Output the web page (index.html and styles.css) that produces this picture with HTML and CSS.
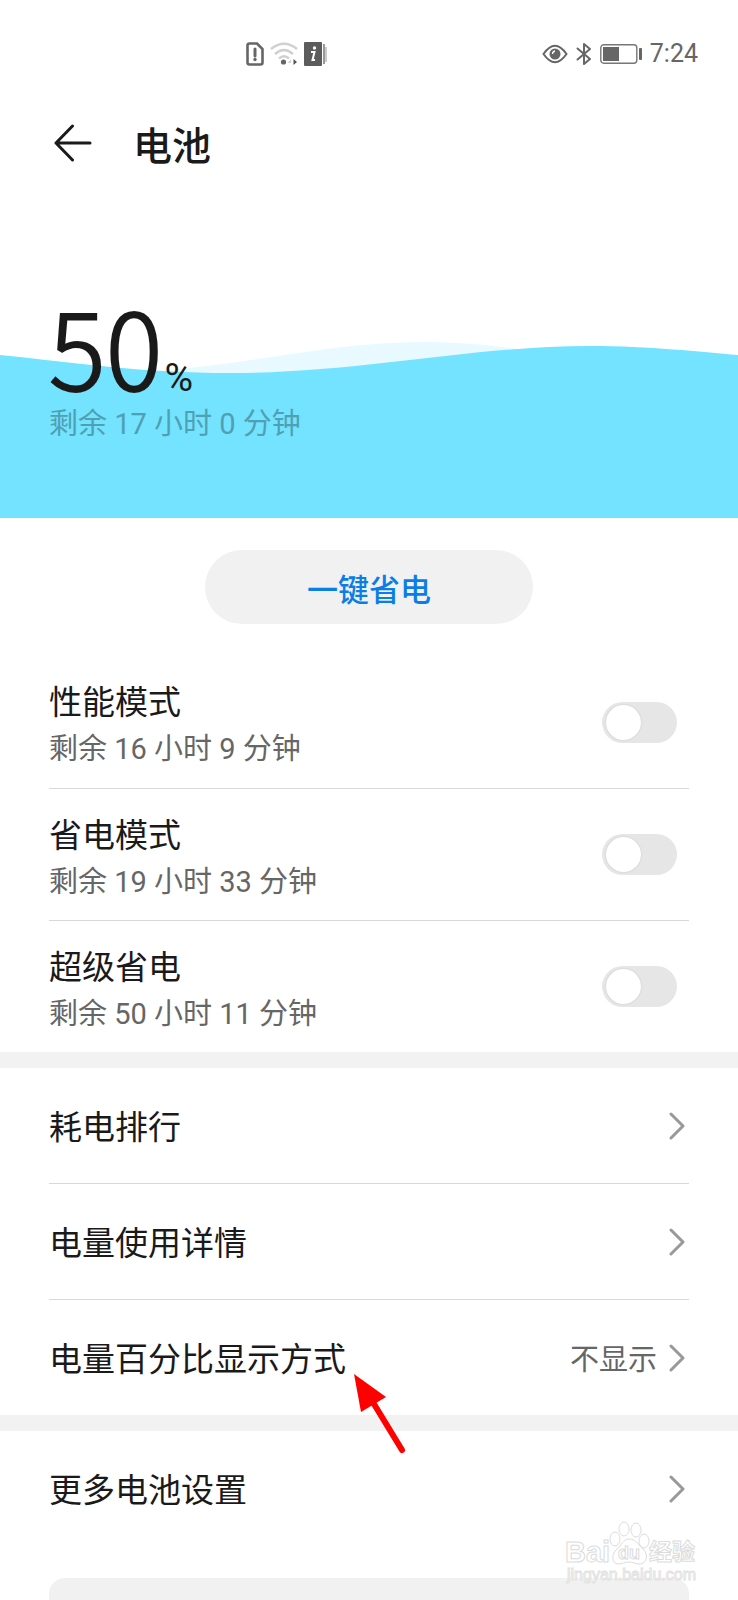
FILE: index.html
```html
<!DOCTYPE html>
<html lang="zh-CN">
  <head>
    <meta charset="UTF-8" />
    <meta name="viewport" content="width=device-width, initial-scale=1.0" />
    <title>电池</title>
    <link rel="stylesheet" href="styles.css">
  </head>
  <body>
    <div class="page">
      <div class="status-bar">
        <div class="status-notify">
          <svg width="18" height="24" viewBox="0 0 18 24">
            <path d="M3.5 1.5H11L16.5 7V20.500Q16.500 22.500 14.500 22.500H3.500Q1.500 22.500 1.500 20.500V3.500Q1.500 1.500 3.500 1.500Z" fill="none" stroke="#666" stroke-width="2.6" />
            <path d="M9 7V14" stroke="#666" stroke-width="3" stroke-linecap="round" />
            <circle cx="9" cy="17.500" r="1.700" fill="#666" />
          </svg>
          <svg width="28" height="24" viewBox="0 0 28 24">
            <g fill="none" stroke="#d0d0d0" stroke-width="2.400">
              <path d="M1 7Q14 -3.500 27 7" />
              <path d="M5 12Q14 4 23 12" />
              <path d="M9 16.500Q14 12 19 16.500" />
            </g>
            <circle cx="13.500" cy="20" r="2.600" fill="#666" />
            <path d="M21 17.500L17.500 21H21Z" fill="#d0d0d0" />
            <path d="M23.500 17L27 20L23.500 23Z" fill="#555" />
          </svg>
          <svg width="24" height="24" viewBox="0 0 24 24">
            <rect x="0" y="0" width="18" height="24" rx="1" fill="#5c5c5c" />
            <path d="M20 2V22" stroke="#777" stroke-width="1.500" />
            <path d="M22 5V20" stroke="#999" stroke-width="1" />
            <circle cx="10.500" cy="6" r="1.700" fill="#fff" />
            <path d="M7 10H10.500L8.500 18H11" fill="none" stroke="#fff" stroke-width="2" />
          </svg>
        </div>
        <div class="status-system">
          <svg width="26" height="20" viewBox="0 0 26 20">
            <path d="M1.500 10Q13 -6.500 24.500 10Q13 26.500 1.500 10Z" fill="none" stroke="#666" stroke-width="2" />
            <circle cx="13" cy="10" r="5.500" fill="#666" />
            <path d="M13 7Q10.500 7.500 10.500 10" fill="none" stroke="#fff" stroke-width="1.300" />
          </svg>
          <svg width="16" height="24" viewBox="0 0 16 24">
            <path d="M1.500 6.500L14 17L8 22V2L14 7L1.500 17.500" fill="none" stroke="#666" stroke-width="2" stroke-linejoin="round" stroke-linecap="round" />
          </svg>
          <svg width="42" height="20" viewBox="0 0 42 20">
            <rect x="0.800" y="0.800" width="36" height="18.400" rx="3" fill="none" stroke="#777" stroke-width="1.400" />
            <rect x="3" y="3" width="16" height="14" fill="#666" />
            <rect x="39" y="4" width="3" height="12" rx="1" fill="#666" />
          </svg>
          <span class="time">7:24</span>
        </div>
      </div>

      <header class="header">
        <button class="back" aria-label="返回">
          <svg width="38" height="38" viewBox="0 0 38 38">
            <path d="M36 19H2M18.500 2L2 19L18.500 36" fill="none" stroke="#1a1a1a" stroke-width="3" stroke-linecap="round" stroke-linejoin="round" />
          </svg>
        </button>
        <h1>电池</h1>
      </header>

      <section class="hero">
        <svg class="wave" viewBox="0 0 738 178" preserveAspectRatio="none">
          <path d="M0 34C60 34 120 35 180 29C270 20 340 2 425 2C530 2 620 34 738 34V178H0Z" fill="#e8faff" />
          <path d="M0 15C80 23 140 33 230 33C360 33 470 6 590 6C650 6 700 12 738 15V178H0Z" fill="#73e3ff" />
        </svg>
        <p class="level">50<span class="percent">%</span></p>
        <p class="remain">剩余 17 小时 0 分钟</p>
      </section>

      <div class="action">
        <button class="save-button">一键省电</button>
      </div>

      <section class="group">
        <label class="row mode">
          <span class="mode-text">
            <span class="label">性能模式</span>
            <span class="detail">剩余 16 小时 9 分钟</span>
          </span>
          <input type="checkbox" class="switch" />
        </label>
        <label class="row mode">
          <span class="mode-text">
            <span class="label">省电模式</span>
            <span class="detail">剩余 19 小时 33 分钟</span>
          </span>
          <input type="checkbox" class="switch" />
        </label>
        <label class="row mode">
          <span class="mode-text">
            <span class="label">超级省电</span>
            <span class="detail">剩余 50 小时 11 分钟</span>
          </span>
          <input type="checkbox" class="switch" />
        </label>
      </section>

      <nav class="group">
        <a class="row link" href="#">
          <span class="label">耗电排行</span>
          <svg class="chevron" width="16" height="28" viewBox="0 0 16 28"><path d="M2 2L14 14L2 26" /></svg>
        </a>
        <a class="row link" href="#">
          <span class="label">电量使用详情</span>
          <svg class="chevron" width="16" height="28" viewBox="0 0 16 28"><path d="M2 2L14 14L2 26" /></svg>
        </a>
        <a class="row link" href="#">
          <span class="label">电量百分比显示方式</span>
          <span class="value">不显示</span>
          <svg class="chevron" width="16" height="28" viewBox="0 0 16 28"><path d="M2 2L14 14L2 26" /></svg>
          <svg class="pointer" width="54" height="82" viewBox="0 0 54 82">
            <path d="M20 30L48 76" stroke="#f00" stroke-width="6" stroke-linecap="round" />
            <path d="M0 0L32 23L7 38Z" fill="#f00" />
          </svg>
        </a>
      </nav>

      <nav class="group">
        <a class="row link" href="#">
          <span class="label">更多电池设置</span>
          <svg class="chevron" width="16" height="28" viewBox="0 0 16 28"><path d="M2 2L14 14L2 26" /></svg>
        </a>
      </nav>

      <div class="card"></div>

      <svg class="watermark" width="136" height="68" viewBox="0 0 136 68">
        <g fill="#fff" stroke="#dcdcdc" stroke-width="1">
          <ellipse cx="51" cy="21" rx="5" ry="7" />
          <ellipse cx="60" cy="11" rx="5" ry="7" />
          <ellipse cx="72" cy="12" rx="5" ry="7" />
          <ellipse cx="80" cy="23" rx="5" ry="7" />
          <path d="M65 21C72 21 74 27 79 31C85 37 83 46 75 46C71 46 69 44 65 44C61 44 58 46 54 46C48 46 47 37 52 32C57 28 59 21 65 21Z" />
          <text x="1" y="44" class="mark-name">Bai</text>
          <text x="54" y="41" class="mark-du">du</text>
          <text x="85" y="42" class="mark-cn">经验</text>
        </g>
        <text x="3" y="62" class="mark-url">jingyan.baidu.com</text>
      </svg>
    </div>
  </body>
</html>
```
FILE: styles.css
```css
* {
  box-sizing: border-box;
}

body {
  margin: 0;
  background-color: #fff;
  color: #1a1a1a;
  font-family: Roboto, "Noto Sans CJK SC", sans-serif;
}

h1,
p {
  margin: 0;
}

button {
  border: none;
  cursor: pointer;
  font-family: inherit;
}

svg {
  display: block;
}

.page {
  position: relative;
  display: flex;
  flex-direction: column;
  min-height: 100vh;
}

.status-bar {
  display: flex;
  justify-content: space-between;
  padding: 36px 40px 0 246px;
}

.status-notify,
.status-system {
  display: flex;
  align-items: center;
  height: 36px;
}

.status-notify {
  gap: 6px;
}

.status-system {
  gap: 8px;
}

.time {
  color: #666;
  font-size: 25px;
  line-height: 36px;
}

.header {
  display: flex;
  align-items: center;
  gap: 41px;
  height: 78px;
  margin-top: 32px;
  padding: 0 49px;
}

.back {
  padding: 0 0 0 5px;
  background: none;
}

h1 {
  font-size: 39px;
  font-weight: 500;
}

.hero {
  position: relative;
  height: 336px;
  padding: 107px 49px 0;
}

.wave {
  position: absolute;
  left: 0;
  bottom: 0;
  z-index: -1;
  width: 100%;
  height: 178px;
}

.level {
  font-family: "Noto Sans CJK SC", sans-serif;
  font-size: 106px;
  font-weight: 300;
  line-height: 112px;
  -webkit-text-stroke: 2px #1a1a1a;
}

.percent {
  margin-left: 2px;
  font-family: Roboto, sans-serif;
  font-size: 39px;
  font-weight: 400;
  line-height: 46px;
  -webkit-text-stroke: 0;
}

.remain {
  color: #4fa0b3;
  font-size: 29px;
  line-height: 46px;
}

.action {
  display: flex;
  justify-content: center;
  padding: 32px 49px;
}

.save-button {
  width: 328px;
  height: 74px;
  border-radius: 37px;
  background-color: #f1f1f1;
  color: #0a7de6;
  font-size: 31px;
  font-weight: 500;
}

.group {
  padding: 0 49px;
}

.group + .group {
  border-top: 16px solid #f2f2f2;
}

.row {
  display: flex;
  align-items: center;
  color: inherit;
  text-decoration: none;
}

.row + .row {
  border-top: 1px solid #d8d8d8;
}

.mode {
  justify-content: space-between;
  height: 132px;
  padding-right: 12px;
}

.mode-text {
  display: flex;
  flex-direction: column;
  padding-top: 8px;
}

.label {
  font-size: 33px;
  line-height: 46px;
}

.detail,
.value {
  color: #666;
  font-size: 29px;
  line-height: 46px;
}

.switch {
  appearance: none;
  width: 75px;
  height: 41px;
  margin: 0;
  padding: 3px 4px;
  border-radius: 21px;
  background-color: #e6e6e6;
}

.switch::before {
  content: "";
  display: block;
  width: 35px;
  height: 35px;
  border-radius: 50%;
  background-color: #fff;
  box-shadow: 0 0 2px rgba(0, 0, 0, 0.15);
}

.switch:checked {
  padding-left: 36px;
  background-color: #0a7de6;
}

.link {
  position: relative;
  box-sizing: content-box;
  height: 115px;
  padding-right: 4px;
}

.link .label,
.link .value {
  padding-top: 4px;
}

.link .label {
  flex: 1;
}

.chevron {
  margin-left: 12px;
  fill: none;
  stroke: #999;
  stroke-width: 3;
  stroke-linecap: round;
  stroke-linejoin: round;
}

/* red arrow under the percentage row */
.pointer {
  position: absolute;
  top: 74px;
  left: 305px;
  z-index: 1;
}

.card {
  flex: 1;
  min-height: 20px;
  margin: 32px 49px 0;
  border-radius: 16px 16px 0 0;
  background-color: #f1f1f1;
}

.watermark {
  position: absolute;
  right: 38px;
  bottom: 14px;
}

.mark-name,
.mark-du,
.mark-url {
  font-family: "Liberation Sans", sans-serif;
}

.mark-name {
  font-size: 29px;
  font-weight: 700;
}

.mark-du {
  font-size: 18px;
  font-weight: 700;
}

.mark-cn {
  font-family: "Noto Sans CJK SC", sans-serif;
  font-size: 23px;
  font-weight: 700;
}

.mark-url {
  fill: #fff;
  stroke: #e2e2e2;
  stroke-width: 1px;
  font-size: 16px;
}
```
